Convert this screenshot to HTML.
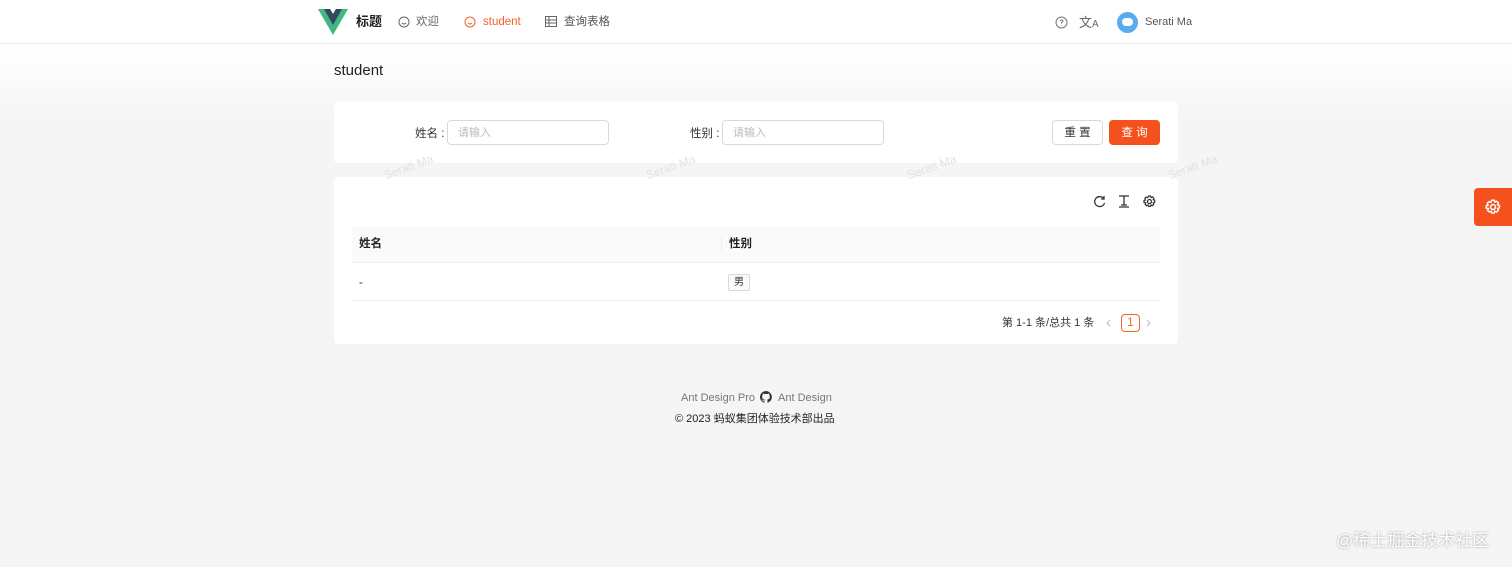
<!DOCTYPE html>
<html><head><meta charset="utf-8"><style>
*{box-sizing:border-box;margin:0;padding:0}
body{width:1512px;height:567px;background:#f5f5f5;font-family:"Liberation Sans","Noto Sans CJK SC",sans-serif;font-size:11.5px;color:#333;position:relative;overflow:hidden;line-height:1.2}
.hdr{position:absolute;top:0;left:0;width:1512px;height:44px;background:#fff;border-bottom:1px solid #eee}
.grad{position:absolute;top:44px;left:0;width:1512px;height:80px;background:linear-gradient(#fff,#f5f5f5)}
.a{position:absolute;white-space:nowrap}
.card{position:absolute;background:#fff;border-radius:4px}
.inp{position:absolute;height:25px;border:1px solid #d9d9d9;border-radius:4px;color:#bbb;font-size:11px;padding:6px 10px}
.wm{position:absolute;color:#e2e2e2;font-size:12px;transform:rotate(-20deg);white-space:nowrap}
</style></head><body>
<div class="hdr"></div><div class="grad"></div>
<svg class="a" style="left:318px;top:9px" width="30" height="26" viewBox="0 0 30 26"><path d="M0 0h12l3 5 3-5h12L15 26z" fill="#41b883"/><path d="M6 0h6l3 5 3-5h6L15 16z" fill="#34495e"/></svg>
<div class="a" style="left:356px;top:14px;font-size:13px;font-weight:bold;color:#222">标题</div>
<svg class="a" style="left:398px;top:16px" width="12" height="12" viewBox="0 0 12 12" fill="none" stroke="#666"><circle cx="6" cy="6" r="5"/><path d="M4 7q2 2 4 0"/></svg>
<div class="a" style="left:416px;top:16px;color:#666">欢迎</div>
<svg class="a" style="left:464px;top:16px" width="12" height="12" viewBox="0 0 12 12" fill="none" stroke="#f4622a"><circle cx="6" cy="6" r="5"/><path d="M4 7q2 2 4 0"/></svg>
<div class="a" style="left:483px;top:16px;color:#f4622a">student</div>
<svg class="a" style="left:545px;top:16px" width="12" height="11" viewBox="0 0 12 11" fill="none" stroke="#666"><rect x=".5" y=".5" width="11" height="10"/><path d="M.5 4h11M.5 7h11M4 .5v10"/></svg>
<div class="a" style="left:564px;top:16px;color:#555">查询表格</div>
<svg class="a" style="left:1055px;top:16px" width="13" height="13" viewBox="0 0 13 13" fill="none" stroke="#777"><circle cx="6.5" cy="6.5" r="5.5"/><path d="M5 5q1.5-2 3 0q0 1-1.5 1.5v1M6.5 9.5v.5"/></svg>
<div class="a" style="left:1079px;top:15px;color:#666;font-size:13px">文<span style="font-size:10px">A</span></div>
<div class="a" style="left:1117px;top:12px;width:21px;height:21px;border-radius:50%;background:#5aaaf0"><div style="margin:6px 0 0 5px;width:11px;height:8px;border-radius:4px;background:#fff"></div></div>
<div class="a" style="left:1145px;top:16px;color:#555;font-size:11px">Serati Ma</div>
<div class="a" style="left:334px;top:62px;font-size:15px;color:#222">student</div>
<div class="card" style="left:334px;top:101px;width:844px;height:62px"></div>
<div class="a" style="left:415px;top:128px">姓名 :</div>
<div class="inp" style="left:447px;top:120px;width:162px">请输入</div>
<div class="a" style="left:690px;top:128px">性别 :</div>
<div class="inp" style="left:722px;top:120px;width:162px">请输入</div>
<div class="a" style="left:1052px;top:120px;width:51px;height:25px;border:1px solid #d9d9d9;border-radius:4px;text-align:center;line-height:24px">重 置</div>
<div class="a" style="left:1109px;top:120px;width:51px;height:25px;background:#f4511e;border-radius:4px;text-align:center;line-height:26px;color:#fff">查 询</div>
<div class="card" style="left:334px;top:177px;width:844px;height:167px"></div>
<svg class="a" style="left:1093px;top:195px" width="13" height="13" viewBox="0 0 13 13" fill="none" stroke="#333" stroke-width="1.3"><path d="M11 4A5 5 0 1 0 11.5 8M11 1v3H8"/></svg>
<svg class="a" style="left:1118px;top:195px" width="12" height="13" viewBox="0 0 12 13" fill="none" stroke="#333" stroke-width="1.3"><path d="M1 1h10M6 1v9M1 12h10M3 10h6"/></svg>
<svg class="a" style="left:1143px;top:195px" width="13" height="13" viewBox="0 0 13 13" fill="none" stroke="#333" stroke-width="1.2"><circle cx="6.5" cy="6.5" r="2"/><path d="M5.5 1h2l.5 1.5 1.5-.7 1.4 1.4-.7 1.5 1.5.5v2l-1.5.5.7 1.5-1.4 1.4-1.5-.7-.5 1.5h-2l-.5-1.5-1.5.7-1.4-1.4.7-1.5L1 7.5v-2l1.5-.5-.7-1.5 1.4-1.4 1.5.7z"/></svg>
<div class="a" style="left:352px;top:227px;width:808px;height:36px;background:#fafafa;border-bottom:1px solid #eee"></div>
<div class="a" style="left:721px;top:236px;width:1px;height:17px;background:#eee"></div>
<div class="a" style="left:359px;top:238px;font-weight:bold;color:#222">姓名</div>
<div class="a" style="left:729px;top:238px;font-weight:bold;color:#222">性别</div>
<div class="a" style="left:352px;top:300px;width:808px;height:1px;background:#eee"></div>
<div class="a" style="left:359px;top:277px">-</div>
<div class="a" style="left:728px;top:274px;width:22px;height:17px;border:1px solid #d9d9d9;background:#fafafa;border-radius:2px;font-size:10px;text-align:center;line-height:15px">男</div>
<div class="a" style="left:1002px;top:317px;font-size:11px">第 1-1 条/总共 1 条</div>
<div class="a" style="left:1106px;top:314px;color:#bbb;font-size:15px">‹</div>
<div class="a" style="left:1121px;top:314px;width:19px;height:18px;border:1px solid #f4622a;border-radius:4px;color:#f4622a;text-align:center;line-height:16px">1</div>
<div class="a" style="left:1146px;top:314px;color:#bbb;font-size:15px">›</div>
<div class="wm" style="left:383px;top:160px">Serati Ma</div>
<div class="wm" style="left:645px;top:160px">Serati Ma</div>
<div class="wm" style="left:906px;top:160px">Serati Ma</div>
<div class="wm" style="left:1167px;top:160px">Serati Ma</div>
<div class="a" style="left:1474px;top:188px;width:38px;height:38px;background:#f4511e;border-radius:4px 0 0 4px"></div>
<svg class="a" style="left:1485px;top:199px" width="16" height="16" viewBox="0 0 13 13" fill="none" stroke="#fff" stroke-width="1.2"><circle cx="6.5" cy="6.5" r="2"/><path d="M5.5 1h2l.5 1.5 1.5-.7 1.4 1.4-.7 1.5 1.5.5v2l-1.5.5.7 1.5-1.4 1.4-1.5-.7-.5 1.5h-2l-.5-1.5-1.5.7-1.4-1.4.7-1.5L1 7.5v-2l1.5-.5-.7-1.5 1.4-1.4 1.5.7z"/></svg>
<div class="a" style="left:681px;top:392px;color:#777;font-size:11px">Ant Design Pro</div>
<svg class="a" style="left:760px;top:391px" width="12" height="12" viewBox="0 0 16 16"><path fill="#333" d="M8 0a8 8 0 0 0-2.5 15.6c.4 0 .5-.2.5-.4v-1.4c-2.2.5-2.7-1-2.7-1-.4-.9-.9-1.2-.9-1.2-.7-.5.1-.5.1-.5.8.1 1.2.8 1.2.8.7 1.3 1.9.9 2.3.7.1-.5.3-.9.5-1.1-1.8-.2-3.6-.9-3.6-4 0-.9.3-1.6.8-2.1-.1-.2-.4-1 .1-2.1 0 0 .7-.2 2.2.8a7.5 7.5 0 0 1 4 0c1.5-1 2.2-.8 2.2-.8.4 1.1.2 1.9.1 2.1.5.6.8 1.3.8 2.1 0 3.1-1.9 3.7-3.6 3.9.3.3.5.8.5 1.5v2.2c0 .2.1.5.6.4A8 8 0 0 0 8 0z"/></svg>
<div class="a" style="left:778px;top:392px;color:#777;font-size:11px">Ant Design</div>
<div class="a" style="left:675px;top:413px;color:#222;font-size:11px">© 2023 蚂蚁集团体验技术部出品</div>
<div class="a" style="left:1336px;top:531px;color:#fff;font-size:17px;text-shadow:0 0 2px #999">@稀土掘金技术社区</div>
</body></html>
